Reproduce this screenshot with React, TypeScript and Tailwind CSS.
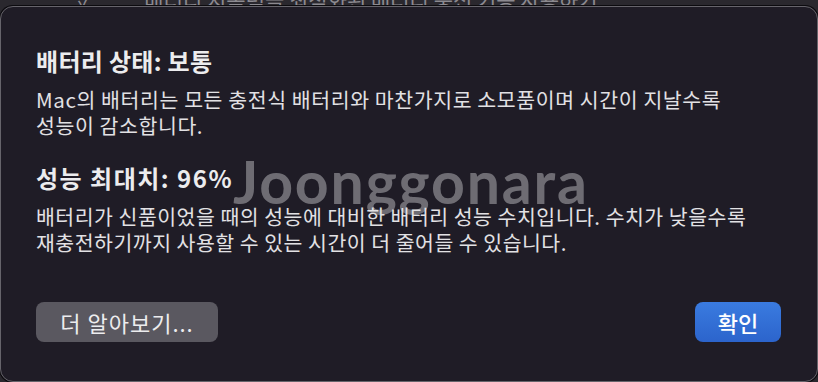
const KR = { fontFamily: '"Noto Sans CJK KR", "Noto Sans", sans-serif' };

function Watermark() {
  return (
    <div
      className="pointer-events-none absolute left-[232px] top-[131px] select-none text-[59px] font-bold tracking-[1.8px] text-[#77767c]/90"
      style={{ fontFamily: 'Lato, "Open Sans", sans-serif' }}
    >
      Joonggonara
    </div>
  );
}

export default function App() {
  return (
    <div className="flex h-[382px] w-[818px] flex-col overflow-hidden bg-[#2a282e]" style={KR}>
      <div className="h-[6px] overflow-hidden">
        <div className="-mt-[16px] flex items-center gap-[52px] pl-[78px] text-[21px] text-[#8c8a90]">
          <span>✓</span>
          <span>배터리 지속력을 최적화된 배터리 충전 기능 사용하기</span>
        </div>
      </div>
      <div className="relative flex flex-1 flex-col rounded-[13px] border border-[#66646b] bg-[#1f1c26] px-[35px] pt-[39px] shadow-[0_0_0_1px_#0c0b0f]">
        <Watermark />
        <h1 className="relative text-[24px] font-bold leading-[30px] tracking-[0.3px] text-[#ececee]">배터리 상태: 보통</h1>
        <p className="relative mt-[10px] text-[20.5px] leading-[26px] tracking-[0.6px] text-[#e2e1e4]">
          Mac의 배터리는 모든 충전식 배터리와 마찬가지로 소모품이며 시간이 지날수록
          <br />
          성능이 감소합니다.
        </p>
        <h2 className="relative mt-[25px] text-[24px] font-bold leading-[30px] tracking-[1.5px] text-[#ececee]">성능 최대치: 96%</h2>
        <p className="relative mt-[10px] text-[20.5px] leading-[26px] tracking-[0.5px] text-[#e2e1e4]">
          배터리가 신품이었을 때의 성능에 대비한 배터리 성능 수치입니다. 수치가 낮을수록
          <br />
          재충전하기까지 사용할 수 있는 시간이 더 줄어들 수 있습니다.
        </p>
        <div className="mt-auto mb-[39px] flex items-center justify-between pr-[1px]">
          <button className="flex h-[40px] w-[182px] items-center justify-center rounded-[8px] bg-[#5a5860] text-[22px] tracking-[1px] text-[#ececee]">
            더 알아보기...
          </button>
          <button className="flex h-[40px] w-[86px] items-center justify-center rounded-[8px] bg-gradient-to-b from-[#3a7be0] to-[#2c64cc] text-[22px] font-medium text-white">
            확인
          </button>
        </div>
      </div>
    </div>
  );
}
